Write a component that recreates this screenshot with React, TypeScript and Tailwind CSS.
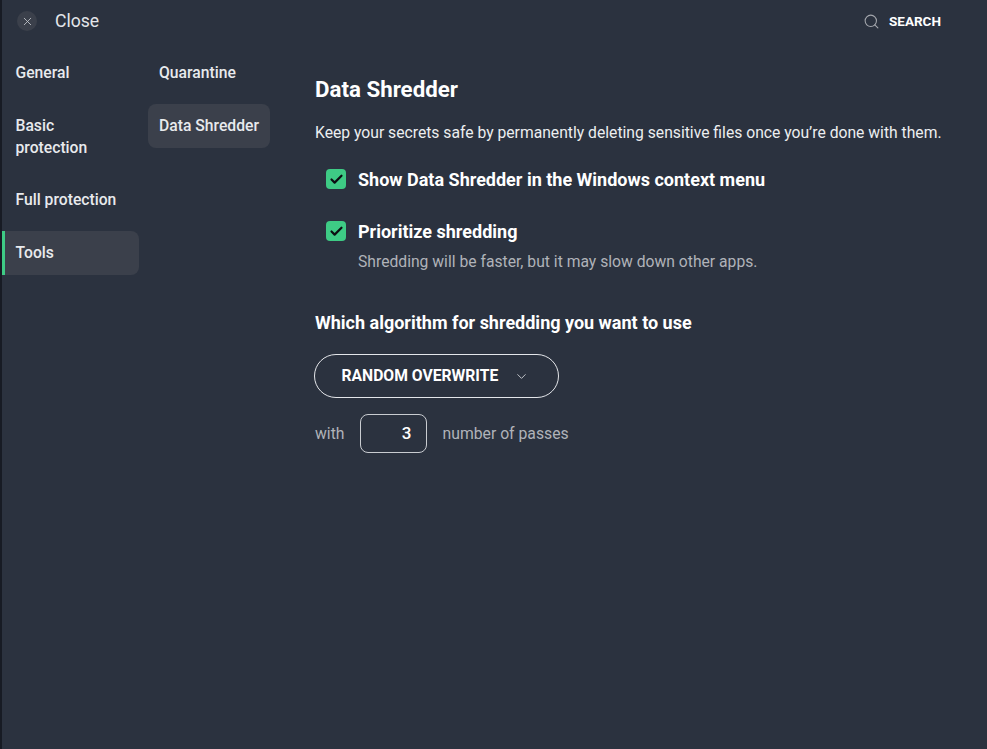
import { ChevronDown, Search, X, Check } from 'lucide-react';

const itemText = 'text-[15.7px] font-medium leading-[22px]';

const mainNav = [
  { label: 'General', box: 'pt-[12px] pb-[10px] pl-[13.5px] pr-4' },
  { label: 'Basic protection', box: 'pt-[12px] pb-[10px] pl-[13.5px] pr-4' },
  { label: 'Full protection', box: 'py-[11px] pl-[13.5px] pr-4' },
  {
    label: 'Tools',
    box: 'rounded-r-lg border-l-[3px] border-[#3ecb85] bg-[#3b404b] py-[11px] pl-[10.5px] pr-4',
  },
];

const subNav = [
  { label: 'Quarantine', box: 'pt-[12px] pb-[10px] px-[11px]' },
  { label: 'Data Shredder', box: 'rounded-lg bg-[#3b404b] p-[11px]' },
];

function CheckBox() {
  return (
    <span className="flex h-5 w-5 shrink-0 items-center justify-center rounded-[4px] bg-[#3ecb85]">
      <Check className="h-[15px] w-[15px] text-[#0c0e12]" strokeWidth={3.5} />
    </span>
  );
}

export default function App() {
  return (
    <div
      className="flex h-[749px] w-[987px] overflow-hidden bg-[#2b323f] text-[#e8eaed]"
      style={{ fontFamily: 'Roboto, sans-serif' }}
    >
      <div className="w-[2px] shrink-0 bg-[#171b24]" />
      <div className="flex min-w-0 flex-1 flex-col">
        {/* Top bar */}
        <header className="flex h-[50px] items-start justify-between pt-[11px]">
          <div className="flex items-center">
            <span className="ml-[15px] flex h-5 w-5 items-center justify-center rounded-full bg-[#3b404b]">
              <X className="h-[13px] w-[13px] text-[#c9ccd1]" strokeWidth={1.5} />
            </span>
            <span className="ml-[18px] text-[17.6px] leading-5 text-[#e4e6ea]">Close</span>
          </div>
          <div className="mr-[46px] flex items-center gap-[9px]">
            <Search className="h-[17px] w-[17px] text-[#a4a7ad]" strokeWidth={1.5} />
            <span className="text-[13.5px] font-bold leading-5 text-white">SEARCH</span>
          </div>
        </header>

        <div className="flex flex-1">
          {/* Main menu */}
          <nav className="flex w-[137px] shrink-0 flex-col gap-[9px]">
            {mainNav.map((item) => (
              <div key={item.label} className={`${item.box} ${itemText}`}>
                {item.label}
              </div>
            ))}
          </nav>

          {/* Sub menu */}
          <nav className="ml-[9px] flex w-[122px] shrink-0 flex-col gap-[10px]">
            {subNav.map((item) => (
              <div key={item.label} className={`whitespace-nowrap ${item.box} ${itemText}`}>
                {item.label}
              </div>
            ))}
          </nav>

          {/* Content */}
          <main className="ml-[45px] min-w-0 flex-1 pt-[26px]">
            <h1 className="text-[22.3px] font-bold leading-[26px] text-white">Data Shredder</h1>
            <p className="mt-[21px] whitespace-nowrap text-[15.7px] leading-5 text-[#eceef0]">
              Keep your secrets safe by permanently deleting sensitive files once you’re done with them.
            </p>

            <div className="mt-[26px] flex items-start gap-[12px] pl-[11px]">
              <CheckBox />
              <span className="mt-[1px] text-[18px] font-bold leading-5 text-white">
                Show Data Shredder in the Windows context menu
              </span>
            </div>

            <div className="mt-[31px] flex items-start gap-[12px] pl-[11px]">
              <CheckBox />
              <span className="mt-[1px] text-[18px] font-bold leading-5 text-white">Prioritize shredding</span>
            </div>
            <p className="mt-[10px] pl-[43px] text-[15.7px] leading-5 text-[#b0b3b9]">
              Shredding will be faster, but it may slow down other apps.
            </p>

            <h2 className="mt-[41px] text-[18px] font-bold leading-5 text-white">
              Which algorithm for shredding you want to use
            </h2>

            <button className="ml-[-1px] mt-[21px] flex h-[44px] w-[245px] items-center rounded-full border border-[#e4e6ea] pl-[26.5px] text-[15.7px] font-bold text-white">
              RANDOM OVERWRITE
              <ChevronDown className="ml-[16px] h-[15px] w-[15px] text-[#c9ccd1]" strokeWidth={1.5} />
            </button>

            <div className="mt-[16px] flex items-center text-[15.75px] text-[#b0b3b9]">
              <span>with</span>
              <span className="ml-[15px] flex h-[39px] w-[67px] items-center justify-end rounded-lg border border-[#c9ccd1] pr-[14px] text-[17px] font-medium text-white">
                3
              </span>
              <span className="ml-[16px]">number of passes</span>
            </div>
          </main>
        </div>
      </div>
    </div>
  );
}
